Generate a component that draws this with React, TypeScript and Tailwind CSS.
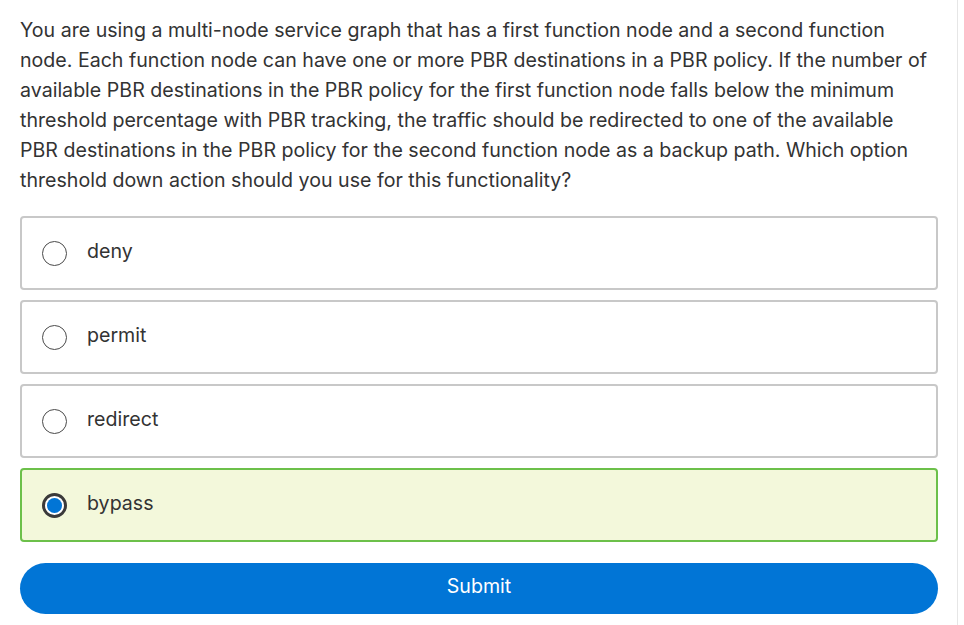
import React from "react";

const options = [
  { label: "deny", selected: false },
  { label: "permit", selected: false },
  { label: "redirect", selected: false },
  { label: "bypass", selected: true },
];

const lines = [
  "You are using a multi-node service graph that has a first function node and a second function",
  "node. Each function node can have one or more PBR destinations in a PBR policy. If the number of",
  "available PBR destinations in the PBR policy for the first function node falls below the minimum",
  "threshold percentage with PBR tracking, the traffic should be redirected to one of the available",
  "PBR destinations in the PBR policy for the second function node as a backup path. Which option",
  "threshold down action should you use for this functionality?",
];

export default function App() {
  return (
    <div className="flex h-[625px] w-[964px] bg-white">
      <div
        className="w-[958px] border-r border-[#e6e6e6] px-5 pt-[15px] text-[#333333]"
        style={{ fontFamily: "Inter, 'Noto Sans', sans-serif" }}
      >
        <p className="whitespace-nowrap text-[19.6px] leading-[30px]">
          {lines.map((l, i) => (
            <React.Fragment key={i}>
              {l}
              {i < lines.length - 1 && <br />}
            </React.Fragment>
          ))}
        </p>
        <div className="mt-[21px] flex w-[918px] flex-col gap-[10px]">
          {options.map((o) => (
            <div
              key={o.label}
              className={
                o.selected
                  ? "flex h-[74px] items-center rounded-[4px] border-2 border-[#6cc04a] bg-[#f3f8db] pl-5"
                  : "flex h-[74px] items-center rounded-[4px] border-2 border-[#c8c8c8] bg-white pl-5"
              }
            >
              {o.selected ? (
                <span className="flex h-[25px] w-[25px] items-center justify-center rounded-full border-[3px] border-[#3a3a3a] bg-white">
                  <span className="h-[15px] w-[15px] rounded-full bg-[#0175d6]" />
                </span>
              ) : (
                <span className="h-[25px] w-[25px] rounded-full border border-[#4a4a4a] bg-white" />
              )}
              <span className="mb-[3px] ml-[20px] text-[19.6px]">{o.label}</span>
            </div>
          ))}
        </div>
        <button className="mt-[21px] flex h-[51px] w-[918px] items-center justify-center rounded-full bg-[#0175d6] pb-[3px] text-[19.6px] text-white">
          Submit
        </button>
      </div>
    </div>
  );
}
